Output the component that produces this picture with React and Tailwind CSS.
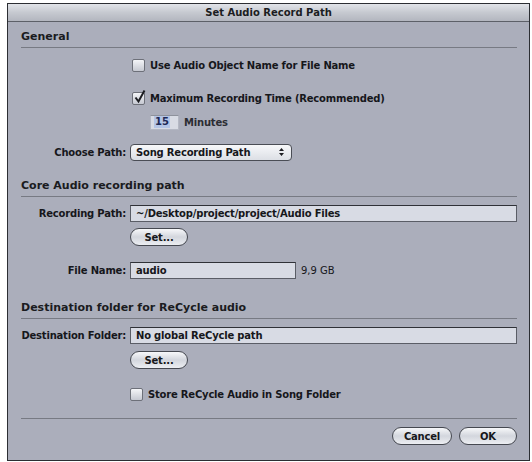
import React from "react";

const font = { fontFamily: '"DejaVu Sans", "Liberation Sans", sans-serif' };

const txt = "text-[10px] font-bold tracking-[-0.2px] text-[#16171b] whitespace-nowrap";

const Checkbox = ({ checked }) => (
  <div className="relative w-[13px] h-[13px] shrink-0 rounded-[2px] border border-[#6d7079] bg-gradient-to-b from-[#f4f5f8] to-[#c6c9d2]">
    {checked && (
      <svg width="14" height="15" viewBox="0 0 14 15" className="absolute left-[0px] top-[-4px]">
        <path d="M2.5 8.5 L5.5 12.5 L11.5 1.5" stroke="#1c1d22" strokeWidth="2" fill="none" />
      </svg>
    )}
  </div>
);

const Field = ({ value, className = "" }) => (
  <div
    className={`h-[17px] border border-[#5a5d66] border-t-[#2f3137] bg-[#d8dbe4] px-[5px] flex items-center ${txt} ${className}`}
  >
    {value}
  </div>
);

const Button = ({ children, className = "" }) => (
  <div
    className={`h-[18px] rounded-full border border-[#454850] bg-gradient-to-b from-[#f7f8fa] via-[#d3d6dd] to-[#eceef2] flex items-center justify-center ${txt} ${className}`}
  >
    {children}
  </div>
);

const Heading = ({ children, className = "" }) => (
  <div className={`border-b border-[#777a83] pb-[2px] ${className}`}>
    <div className="h-[16px] flex items-center text-[11px] font-bold text-[#1a1b20] whitespace-nowrap">{children}</div>
  </div>
);

const Label = ({ children }) => (
  <div className={`w-[109px] shrink-0 text-right pr-[4px] ${txt}`}>{children}</div>
);

export default function App() {
  return (
    <div className="w-[532px] h-[462px] bg-white pt-[3px] pl-[7px]" style={font}>
      <div className="w-[523px] h-[458px] border border-[#2c2e33] bg-[#abaebb] flex flex-col">
        <div className="h-[18px] shrink-0 bg-gradient-to-b from-[#e2e4e9] via-[#c6c9d0] to-[#b3b6bf] border-b border-[#5d6068] flex items-center justify-center text-[10px] font-bold text-[#1c1d22]">
          Set Audio Record Path
        </div>
        <div className="pl-[13px] pr-[12px] flex flex-col">
          <Heading className="mt-[7px]">General</Heading>

          <div className="h-[18px] flex items-center gap-[5px] pl-[111px] mt-[8px]">
            <Checkbox />
            <span className={txt}>Use Audio Object Name for File Name</span>
          </div>

          <div className="h-[18px] flex items-center gap-[5px] pl-[111px] mt-[15px]">
            <Checkbox checked />
            <span className={txt}>Maximum Recording Time (Recommended)</span>
          </div>

          <div className="h-[18px] flex items-center gap-[5px] pl-[129px] mt-[6px]">
            <div className="w-[29px] h-[15px] bg-[#d8dbe4] border border-[#b4b8c4] border-t-[#8e929c] flex items-center pl-[3px]">
              <span className="text-[10px] font-bold text-[#1e2a55] bg-[#b4c5e6] px-[1px] leading-[12px]">15</span>
            </div>
            <span className="text-[10px] font-bold tracking-[-0.2px] text-[#2c2d33]">Minutes</span>
          </div>

          <div className="h-[18px] flex items-center mt-[12px]">
            <Label>Choose Path:</Label>
            <div className="w-[162px] h-[17px] rounded-[4px] border border-[#4a4d55] bg-gradient-to-b from-[#f7f8fa] to-[#dcdfe5] flex items-center justify-between pl-[5px] pr-[7px]">
              <span className={txt}>Song Recording Path</span>
              <svg width="5" height="10" viewBox="0 0 5 10">
                <path d="M0 4 L2.5 1 L5 4 Z M0 6 L2.5 9 L5 6 Z" fill="#1c1d22" />
              </svg>
            </div>
          </div>

          <Heading className="mt-[17px]">Core Audio recording path</Heading>

          <div className="h-[18px] flex items-center mt-[7px]">
            <Label>Recording Path:</Label>
            <Field value="~/Desktop/project/project/Audio Files" className="flex-1" />
          </div>
          <div className="h-[18px] flex items-center pl-[109px] mt-[6px]">
            <Button className="w-[58px]">Set...</Button>
          </div>

          <div className="h-[18px] flex items-center mt-[15px]">
            <Label>File Name:</Label>
            <Field value="audio" className="w-[166px]" />
            <span className="ml-[5px] text-[10px] text-[#16171b] whitespace-nowrap">9,9 GB</span>
          </div>

          <Heading className="mt-[21px]">Destination folder for ReCycle audio</Heading>

          <div className="h-[18px] flex items-center mt-[7px]">
            <Label>Destination Folder:</Label>
            <Field value="No global ReCycle path" className="flex-1" />
          </div>
          <div className="h-[18px] flex items-center pl-[109px] mt-[7px]">
            <Button className="w-[58px]">Set...</Button>
          </div>

          <div className="h-[18px] flex items-center gap-[5px] pl-[109px] mt-[16px]">
            <Checkbox />
            <span className={txt}>Store ReCycle Audio in Song Folder</span>
          </div>

          <div className="border-b border-[#777a83] mt-[15px]" />

          <div className="h-[18px] flex justify-end gap-[7px] mt-[8px]">
            <Button className="w-[60px]">Cancel</Button>
            <Button className="w-[58px]">OK</Button>
          </div>
        </div>
      </div>
    </div>
  );
}
